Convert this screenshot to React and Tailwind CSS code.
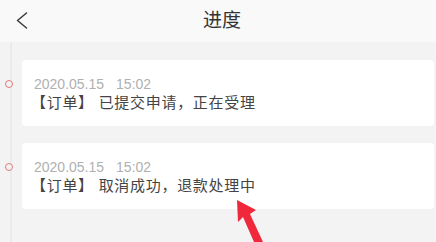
const records = [
	{ time: '2020.05.15', clock: '15:02', text: '【订单】 已提交申请，正在受理' },
	{ time: '2020.05.15', clock: '15:02', text: '【订单】 取消成功，退款处理中' },
]

function App() {
	return (
		<div
			className="relative w-[436px] h-[242px] overflow-hidden bg-[#f3f3f3] flex flex-col"
			style={{ fontFamily: '"Liberation Sans", "Noto Sans CJK SC", sans-serif' }}
		>
			<div className="h-[42px] shrink-0 bg-[#f9f9f9] grid grid-cols-[60px_1fr_60px] items-center">
				<svg className="ml-[16px] mb-[1px]" width="12" height="17" viewBox="0 0 12 17">
					<polyline points="10.5,1 1.5,8.5 10.5,16" fill="none" stroke="#3a3a3a" strokeWidth="1.5" strokeLinecap="round" strokeLinejoin="round" />
				</svg>
				<h1 className="text-center pl-2 text-[19px] text-[#333]">进度</h1>
				<span />
			</div>

			<div className="flex-1 ml-[10px] border-l-2 border-[#ebebeb] flex flex-col gap-[17px] pt-[18px] pl-[10px] pr-[2px]">
				{records.map((item, i) => (
					<div key={i} className="relative">
						{/* timeline dot */}
						<span className="absolute -left-[17px] top-[20px] h-[8px] w-[8px] rounded-full border-[1.5px] border-[#e07a7a] bg-[#f3f3f3]" />
						<div className="bg-white rounded-[4px] pt-[14px] pb-[14px] pl-[12px]">
							<p className="text-[14px] leading-[20px] text-[#b0b0b0]">
								{item.time}
								<span className="ml-3">{item.clock}</span>
							</p>
							<p className="text-[15px] leading-[18px] text-[#444] -ml-[3px] tracking-[0.7px]">
								{item.text}
							</p>
						</div>
					</div>
				))}
			</div>

			{/* red annotation arrow */}
			<svg className="absolute left-[228px] top-[196px]" width="40" height="50" viewBox="0 0 40 50">
				<path d="M9 4 L28 14 L22 18 L35 46 L26 46 L15 21 L10 26 Z" fill="#f0283c" />
			</svg>
		</div>
	)
}

export default App
